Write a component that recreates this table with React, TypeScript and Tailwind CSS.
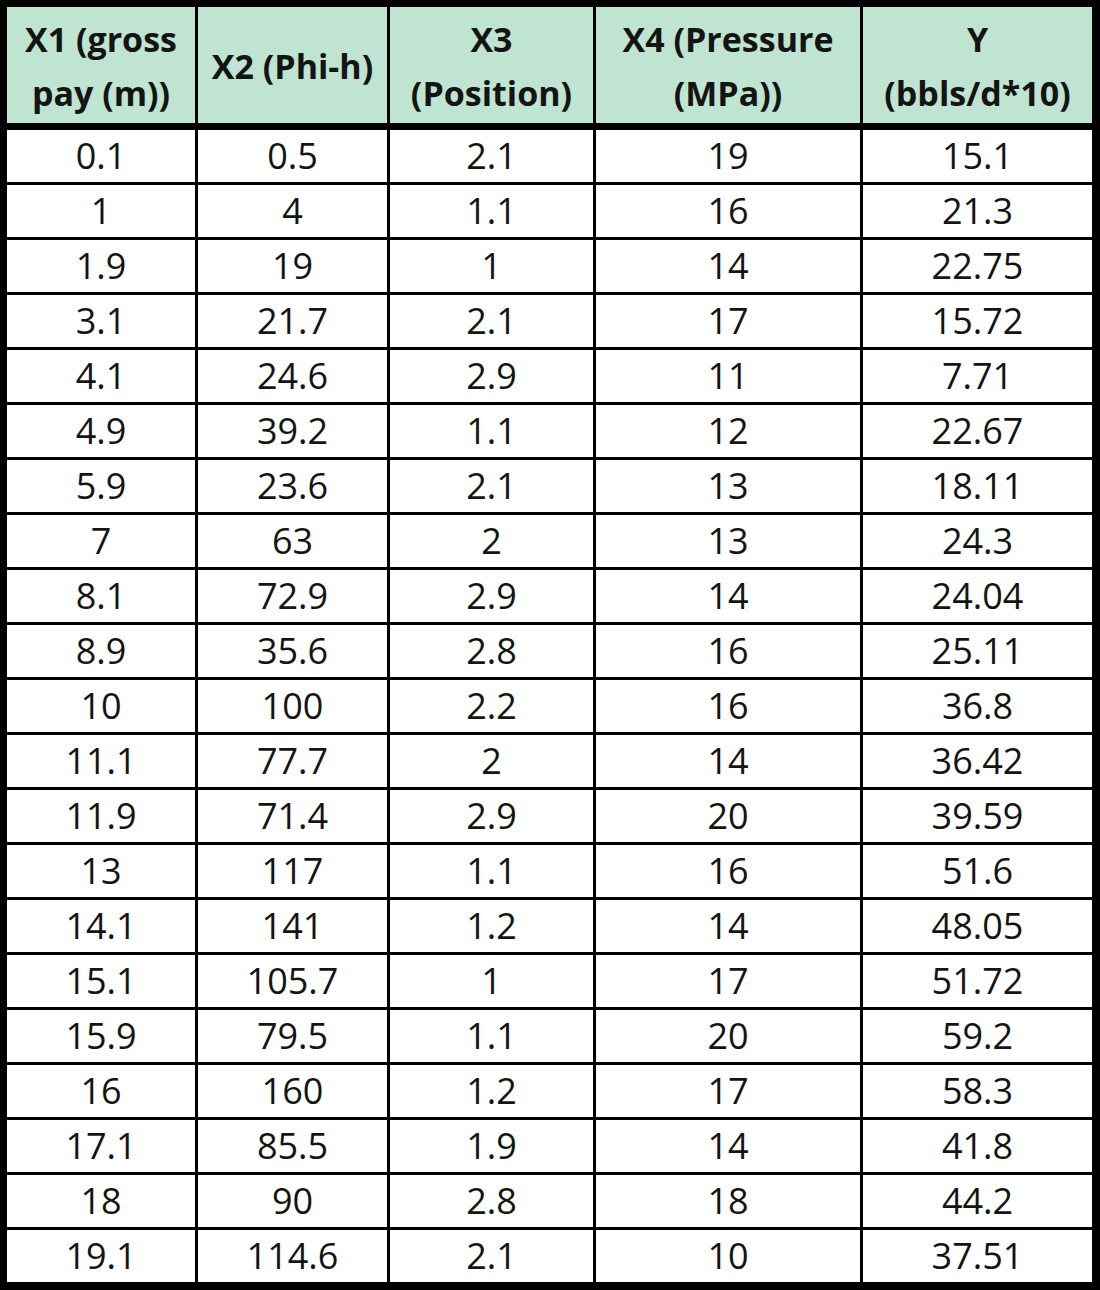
import React from "react";

const headers: string[][] = [
  ["X1 (gross", "pay (m))"],
  ["X2 (Phi-h)"],
  ["X3", "(Position)"],
  ["X4 (Pressure", "(MPa))"],
  ["Y", "(bbls/d*10)"],
];

const rows: string[][] = [
  ["0.1", "0.5", "2.1", "19", "15.1"],
  ["1", "4", "1.1", "16", "21.3"],
  ["1.9", "19", "1", "14", "22.75"],
  ["3.1", "21.7", "2.1", "17", "15.72"],
  ["4.1", "24.6", "2.9", "11", "7.71"],
  ["4.9", "39.2", "1.1", "12", "22.67"],
  ["5.9", "23.6", "2.1", "13", "18.11"],
  ["7", "63", "2", "13", "24.3"],
  ["8.1", "72.9", "2.9", "14", "24.04"],
  ["8.9", "35.6", "2.8", "16", "25.11"],
  ["10", "100", "2.2", "16", "36.8"],
  ["11.1", "77.7", "2", "14", "36.42"],
  ["11.9", "71.4", "2.9", "20", "39.59"],
  ["13", "117", "1.1", "16", "51.6"],
  ["14.1", "141", "1.2", "14", "48.05"],
  ["15.1", "105.7", "1", "17", "51.72"],
  ["15.9", "79.5", "1.1", "20", "59.2"],
  ["16", "160", "1.2", "17", "58.3"],
  ["17.1", "85.5", "1.9", "14", "41.8"],
  ["18", "90", "2.8", "18", "44.2"],
  ["19.1", "114.6", "2.1", "10", "37.51"],
];

const cols = "grid grid-cols-[188px_189px_203px_264px_229px] gap-x-[3px]";

export default function App() {
  return (
    <div
      className="w-[1100px] h-[1290px] bg-black pt-[7px] pl-[7px] pr-[8px] pb-[8px] text-[#141414]"
      style={{ fontFamily: '"Open Sans", "Noto Sans", sans-serif' }}
    >
      {/* header */}
      <div className={`${cols} h-[116px] mb-[7px]`}>
        {headers.map((h, i) => (
          <div
            key={i}
            className="bg-[#bfe4d1] flex flex-col items-center justify-center pt-[2px] text-[34px] font-bold leading-[54px] whitespace-nowrap"
          >
            {h.map((line, j) => (
              <span key={j}>{line}</span>
            ))}
          </div>
        ))}
      </div>
      {/* body */}
      <div className={`${cols} gap-y-[3px] auto-rows-[52px]`}>
        {rows.map((r, i) =>
          r.map((v, j) => (
            <div
              key={`${i}-${j}`}
              className="bg-white flex items-center justify-center text-[36px] leading-none"
            >
              {v}
            </div>
          ))
        )}
      </div>
    </div>
  );
}
